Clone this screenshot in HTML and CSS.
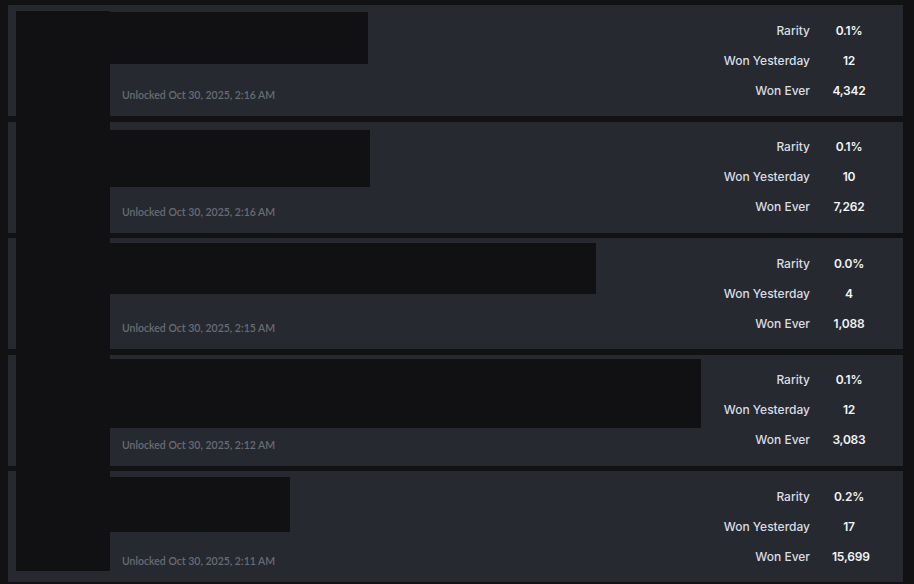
FILE: index.html
```html
<!DOCTYPE html>
<html>
<head>
<meta name="viewport" content="width=device-width, initial-scale=1">
<link rel="stylesheet" href="styles.css">
</head>
<body>

<div class="list">
  <div class="redact-icons"></div>

  <div class="card">
    <div class="info">
      <div class="redact-title" style="width:258px;height:52px;margin-top:7px"></div>
      <div class="unlocked">Unlocked Oct 30, 2025, 2:16 AM</div>
    </div>
    <div class="stats">
      <span class="label">Rarity</span><span class="value">0.1%</span>
      <span class="label">Won Yesterday</span><span class="value">12</span>
      <span class="label">Won Ever</span><span class="value">4,342</span>
    </div>
  </div>

  <div class="card">
    <div class="info">
      <div class="redact-title" style="width:260px;height:57px;margin-top:8px"></div>
      <div class="unlocked">Unlocked Oct 30, 2025, 2:16 AM</div>
    </div>
    <div class="stats">
      <span class="label">Rarity</span><span class="value">0.1%</span>
      <span class="label">Won Yesterday</span><span class="value">10</span>
      <span class="label">Won Ever</span><span class="value">7,262</span>
    </div>
  </div>

  <div class="card">
    <div class="info">
      <div class="redact-title" style="width:486px;height:51px;margin-top:5px"></div>
      <div class="unlocked">Unlocked Oct 30, 2025, 2:15 AM</div>
    </div>
    <div class="stats">
      <span class="label">Rarity</span><span class="value">0.0%</span>
      <span class="label">Won Yesterday</span><span class="value">4</span>
      <span class="label">Won Ever</span><span class="value">1,088</span>
    </div>
  </div>

  <div class="card">
    <div class="info">
      <div class="redact-title" style="width:591px;height:69px;margin-top:4px"></div>
      <div class="unlocked">Unlocked Oct 30, 2025, 2:12 AM</div>
    </div>
    <div class="stats">
      <span class="label">Rarity</span><span class="value">0.1%</span>
      <span class="label">Won Yesterday</span><span class="value">12</span>
      <span class="label">Won Ever</span><span class="value">3,083</span>
    </div>
  </div>

  <div class="card">
    <div class="info">
      <div class="redact-title" style="width:180px;height:55px;margin-top:6px"></div>
      <div class="unlocked">Unlocked Oct 30, 2025, 2:11 AM</div>
    </div>
    <div class="stats">
      <span class="label">Rarity</span><span class="value">0.2%</span>
      <span class="label">Won Yesterday</span><span class="value">17</span>
      <span class="label">Won Ever</span><span class="value">15,699</span>
    </div>
  </div>
</div>

</body>
</html>
```

FILE: styles.css
```css
body {
  margin: 0;
  background-color: #121214;
  font-family: Inter, "Noto Sans", sans-serif;
}

.list {
  position: relative;
  padding: 5px 11px 0 8px;
  display: flex;
  flex-direction: column;
  gap: 5.5px;
}

/* black box covering the achievement icons */
.redact-icons {
  position: absolute;
  left: 16px;
  top: 11px;
  width: 94px;
  height: 560px;
  background-color: #111113;
  z-index: 2;
}

.card {
  display: flex;
  height: 111px;
  background-color: #262930;
  padding-left: 102px;
}

.info {
  flex: 1;
  display: flex;
  flex-direction: column;
}

.redact-title {
  background-color: #111113;
}

.unlocked {
  margin-top: auto;
  margin-bottom: 15px;
  padding-left: 12px;
  font-family: Lato, sans-serif;
  font-size: 10.5px;
  font-weight: 600;
  color: #686c75;
}

.stats {
  display: grid;
  grid-template-columns: auto 56px;
  grid-auto-rows: 30px;
  align-content: start;
  align-items: center;
  padding: 10px 37px 0 0;
  font-size: 12px;
  font-weight: 500;
}

.stats .label {
  text-align: right;
  color: #d9dde4;
}

.stats .value {
  text-align: center;
  color: #f2f4f7;
  font-weight: 600;
  letter-spacing: -0.2px;
  padding-left: 22px;
}
```
